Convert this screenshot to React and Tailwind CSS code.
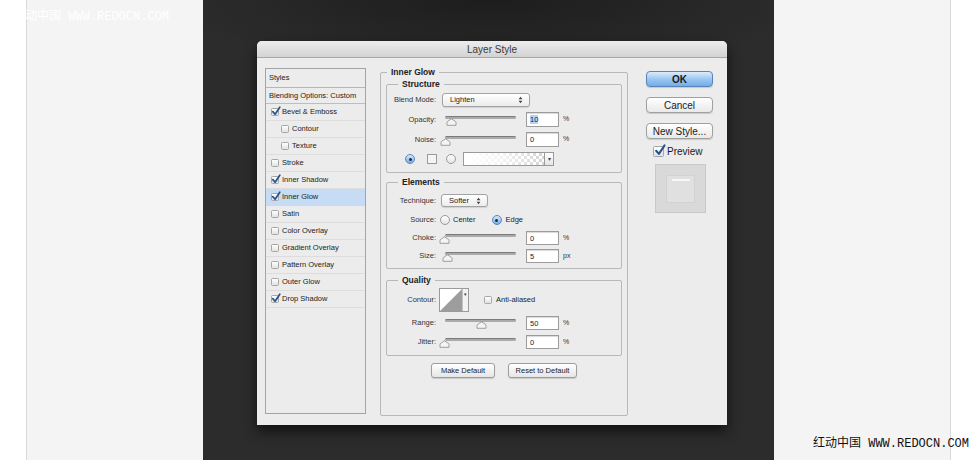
import React from 'react'

const styleRows = [
  { label: 'Bevel & Emboss', on: true },
  { label: 'Contour', indent: true },
  { label: 'Texture', indent: true },
  { label: 'Stroke' },
  { label: 'Inner Shadow', on: true },
  { label: 'Inner Glow', on: true, active: true },
  { label: 'Satin' },
  { label: 'Color Overlay' },
  { label: 'Gradient Overlay' },
  { label: 'Pattern Overlay' },
  { label: 'Outer Glow' },
  { label: 'Drop Shadow', on: true },
]

const Check = ({ on, big }) => (
  <span className={`relative block shrink-0 rounded-[1.5px] border border-[#a6a6a6] bg-linear-to-b from-white to-[#e2e2e2] ${big ? 'w-[11px] h-[11px]' : 'w-[8px] h-[8px]'}`}>
    {on && (
      <svg className={`absolute ${big ? '-top-[3px] left-[0px]' : '-top-[3px] -left-[1px]'}`} width={big ? 12 : 10} height={big ? 12 : 10} viewBox="0 0 10 10">
        <path d="M1.8 5.6 L4.1 8.2 L8.8 1.2" stroke="#28528a" strokeWidth="1.7" fill="none" strokeLinecap="round" strokeLinejoin="round" />
      </svg>
    )}
  </span>
)

const Radio = ({ on }) =>
  on ? (
    <span className="shrink-0 w-[10px] h-[10px] rounded-full border border-[#5b86bc] bg-linear-to-b from-[#d6e8fa] to-[#78ade6] flex items-center justify-center">
      <span className="block w-[3px] h-[3px] rounded-full bg-[#1b2c45]" />
    </span>
  ) : (
    <span className="block shrink-0 w-[10px] h-[10px] rounded-full border border-[#9a9a9a] bg-linear-to-b from-white to-[#e4e4e4]" />
  )

const Arrows = () => (
  <svg width="5" height="8" viewBox="0 0 5 8">
    <path d="M0.6 3.2 L2.5 0.8 L4.4 3.2 Z M0.6 4.8 L2.5 7.2 L4.4 4.8 Z" fill="#444" />
  </svg>
)

const Select = ({ value, w }) => (
  <div className={`flex items-center justify-between rounded-[3px] border border-[#a3a3a3] bg-linear-to-b from-white to-[#ececec] shadow-[0_1px_1px_rgba(0,0,0,0.12)] pl-[7px] pr-[6px] ${w}`}>
    <span className="text-[7.5px] text-[#222]">{value}</span>
    <Arrows />
  </div>
)

const Slider = ({ knob }) => (
  <div className="relative w-[76px] h-[14px] shrink-0">
    <div className="absolute left-[3px] right-[2px] top-[3px] h-[3px] rounded-full bg-[#ababab] border-t border-[#7b7b7b]" />
    <svg className="absolute top-[5px]" style={{ left: knob }} width="11" height="8" viewBox="0 0 11 8">
      <path d="M1 7.3 L1 4.6 Q1 3.6 2 3.1 L5.5 0.8 L9 3.1 Q10 3.6 10 4.6 L10 7.3 Z" fill="#f4f4f4" stroke="#8a8a8a" strokeWidth="0.8" />
    </svg>
  </div>
)

const Field = ({ value, unit, sel, h = 'h-[15px]' }) => (
  <div className="flex items-center ml-[8px]">
    <div className={`w-[33px] ${h} bg-white border border-[#9c9c9c] shadow-[inset_0_1px_1px_rgba(0,0,0,0.15)] flex items-center pl-[3px]`}>
      <span className={`text-[7.5px] leading-[9px] text-[#222] ${sel ? 'bg-[#b4d3f7]' : ''}`}>{value}</span>
    </div>
    <span className="ml-[4px] text-[7px] text-[#333]">{unit}</span>
  </div>
)

const Row = ({ label, className = '', children }) => (
  <div className={`flex items-center ${className}`}>
    <span className="w-[49px] text-right text-[7.5px] text-[#333] shrink-0">{label}</span>
    <div className="ml-[6px] flex items-center">{children}</div>
  </div>
)

const Box = ({ title, className = '', legendMl = 'ml-[11px]', children }) => (
  <fieldset className={`border border-[#b8b8b8] rounded-[2px] ${className}`}>
    <legend className={`${legendMl} px-[4px] text-[8.5px] leading-[10px] font-bold text-[#222]`}>{title}</legend>
    {children}
  </fieldset>
)

const MacButton = ({ children, primary }) => (
  <div
    className={`h-[16px] w-[67px] rounded-[4px] border flex items-center justify-center text-[10px] text-[#1a1a1a] shadow-[0_1px_1px_rgba(0,0,0,0.15)] ${
      primary
        ? 'border-[#5a84b8] bg-linear-to-b from-[#dcecfb] via-[#9ac8f1] to-[#74ade7] font-bold'
        : 'border-[#a0a0a0] bg-linear-to-b from-white to-[#e9e9e9]'
    }`}
  >
    {children}
  </div>
)

const Dialog = () => (
  <div className="ml-[54px] mt-[41px] w-[470px] h-[384px] rounded-t-[5px] bg-[#ececec] flex flex-col shadow-[0_6px_14px_rgba(0,0,0,0.65)]">
    <div className="h-[17px] shrink-0 rounded-t-[5px] border-b border-[#a8a8a8] bg-linear-to-b from-[#ededed] to-[#d3d3d3] flex items-center justify-center">
      <span className="text-[10px] text-[#3a3a3a]">Layer Style</span>
    </div>

    <div className="flex pl-[8px] pt-[10px]">
      {/* styles list */}
      <div className="w-[101px] h-[346px] border border-[#a4a4a4] bg-[#ececec] flex flex-col">
        <div className="h-[19px] border-b border-[#b6b6b6] flex items-center pl-[3px] text-[7.5px] text-[#222]">Styles</div>
        <div className="h-[16px] border-b border-[#bdbdbd] flex items-center pl-[3px] text-[7.5px] text-[#222]">Blending Options: Custom</div>
        {styleRows.map((r) => (
          <div
            key={r.label}
            className={`h-[17px] border-b flex items-center gap-[3px] text-[7.5px] text-[#222] ${r.indent ? 'pl-[15px]' : 'pl-[5px]'} ${
              r.active ? 'bg-[#c6dcf5] border-[#c6dcf5]' : 'border-[#dddddd]'
            }`}
          >
            <Check on={r.on} />
            <span>{r.label}</span>
          </div>
        ))}
      </div>

      {/* settings */}
      <div className="ml-[14px] -mt-[1px] w-[248px]">
        <Box title="Inner Glow" legendMl="ml-[1px]" className="h-[349px] px-[5px]">
          <Box title="Structure" className="mt-[2px] pb-[6px]">
            <Row label="Blend Mode:" className="mt-[4px] h-[14px]">
              <Select value="Lighten" w="w-[88px] h-[14px]" />
            </Row>
            <Row label="Opacity:" className="mt-[5px] h-[15px]">
              <Slider knob={4} />
              <Field value="10" unit="%" sel />
            </Row>
            <Row label="Noise:" className="mt-[5px] h-[15px]">
              <Slider knob={-2} />
              <Field value="0" unit="%" />
            </Row>
            <div className="mt-[5px] h-[14px] flex items-center pl-[18px]">
              <Radio on />
              <span className="block ml-[12px] w-[10px] h-[10px] bg-[#f4f4f4] border border-[#9a9a9a]" />
              <span className="ml-[9px]"><Radio /></span>
              <div className="relative ml-[7px] w-[82px] h-[14px] border border-[#9a9a9a] bg-[repeating-conic-gradient(#d4d4d4_0_25%,#ffffff_0_50%)] bg-[length:6px_6px]">
                <div className="absolute inset-0 bg-linear-to-r from-white via-white/70 to-transparent" />
              </div>
              <div className="w-[9px] h-[14px] border border-l-0 border-[#9a9a9a] bg-linear-to-b from-white to-[#e6e6e6] flex items-center justify-center text-[6px] text-[#444]">▾</div>
            </div>
          </Box>

          <Box title="Elements" className="mt-[4px] pb-[5px]">
            <Row label="Technique:" className="mt-[7px] h-[13px]">
              <Select value="Softer" w="w-[47px] h-[13px] -ml-[1px]" />
            </Row>
            <Row label="Source:" className="mt-[7px] h-[12px]">
              <span className="-ml-[2px]"><Radio /></span>
              <span className="ml-[3px] text-[7.5px] text-[#222]">Center</span>
              <span className="ml-[16px]"><Radio on /></span>
              <span className="ml-[4px] text-[7.5px] text-[#222]">Edge</span>
            </Row>
            <Row label="Choke:" className="mt-[5px] h-[14px]">
              <Slider knob={-3} />
              <Field value="0" unit="%" h="h-[14px]" />
            </Row>
            <Row label="Size:" className="mt-[4px] h-[14px]">
              <Slider knob={0} />
              <Field value="5" unit="px" h="h-[14px]" />
            </Row>
          </Box>

          <Box title="Quality" className="mt-[6px] pb-[6px]">
            <div className="mt-[3px] h-[24px] flex items-center">
              <span className="w-[49px] text-right text-[7.5px] text-[#333]">Contour:</span>
              <div className="ml-[3px] h-[24px] flex border border-[#9a9a9a] bg-white">
                <svg width="22" height="22" viewBox="0 0 22 22">
                  <path d="M0 22 L22 0 L22 22 Z" fill="#9d9d9d" />
                </svg>
                <div className="w-[6px] border-l border-[#c4c4c4] bg-[#f2f2f2] flex justify-center pt-[3px] text-[5px] leading-[5px] text-[#333]">▾</div>
              </div>
              <span className="ml-[15px]"><Check /></span>
              <span className="ml-[4px] text-[7.5px] text-[#222]">Anti-aliased</span>
            </div>
            <Row label="Range:" className="mt-[4px] h-[14px]">
              <Slider knob={34} />
              <Field value="50" unit="%" h="h-[14px]" />
            </Row>
            <Row label="Jitter:" className="mt-[5px] h-[14px]">
              <Slider knob={-3} />
              <Field value="0" unit="%" h="h-[14px]" />
            </Row>
          </Box>

          <div className="mt-[7px] flex justify-center gap-[13px]">
            <div className="h-[15px] w-[64px] rounded-[3px] border border-[#9d9d9d] bg-linear-to-b from-white to-[#e6e6e6] shadow-[0_1px_1px_rgba(0,0,0,0.15)] flex items-center justify-center text-[7.5px] text-[#222]">Make Default</div>
            <div className="h-[15px] w-[69px] rounded-[3px] border border-[#9d9d9d] bg-linear-to-b from-white to-[#e6e6e6] shadow-[0_1px_1px_rgba(0,0,0,0.15)] flex items-center justify-center text-[7.5px] text-[#222]">Reset to Default</div>
          </div>
        </Box>
      </div>

      {/* buttons */}
      <div className="ml-[18px] mt-[3px] w-[67px] flex flex-col">
        <MacButton primary>OK</MacButton>
        <div className="mt-[10px]"><MacButton>Cancel</MacButton></div>
        <div className="mt-[10px]"><MacButton>New Style...</MacButton></div>
        <div className="mt-[7px] h-[11px] flex items-center pl-[7px]">
          <Check on big />
          <span className="ml-[3px] text-[10px] text-[#1a1a1a]">Preview</span>
        </div>
        <div className="mt-[7px] ml-[9px] w-[51px] h-[49px] border border-[#c9c9c9] bg-[#d9d9d9] flex items-center justify-center">
          <div className="w-[29px] h-[28px] bg-[#e0e0e0] border border-[#d2d2d2] flex justify-center pt-[3px]">
            <div className="w-[18px] h-[2px] bg-[#f6f6f6]" />
          </div>
        </div>
      </div>
    </div>
  </div>
)

export default function App() {
  return (
    <div className="relative w-[978px] h-[460px] flex overflow-hidden font-['Liberation_Sans',Arial,sans-serif]">
      <div className="w-[27px] bg-white border-r border-[#d9d9d9]" />
      <div className="w-[176px] bg-[#f4f4f4]" />
      <div className="w-[571px] bg-[radial-gradient(ellipse_320px_70px_at_50%_0,#1d1d1d,#2c2c2c)] flex flex-col">
        <Dialog />
      </div>
      <div className="w-[177px] bg-[#f4f4f4] border-r border-[#d9d9d9]" />
      <div className="flex-1 bg-white" />

      <div className="absolute left-[13px] top-[11px] text-[12px] leading-[13px] text-white font-['Liberation_Mono','Noto_Sans_CJK_SC',monospace]">
        红动中国 WWW.REDOCN.COM
      </div>
      <div className="absolute left-[813px] top-[438px] text-[12px] leading-[13px] text-[#111] font-['Liberation_Mono','Noto_Sans_CJK_SC',monospace]">
        红动中国 WWW.REDOCN.COM
      </div>
    </div>
  )
}
